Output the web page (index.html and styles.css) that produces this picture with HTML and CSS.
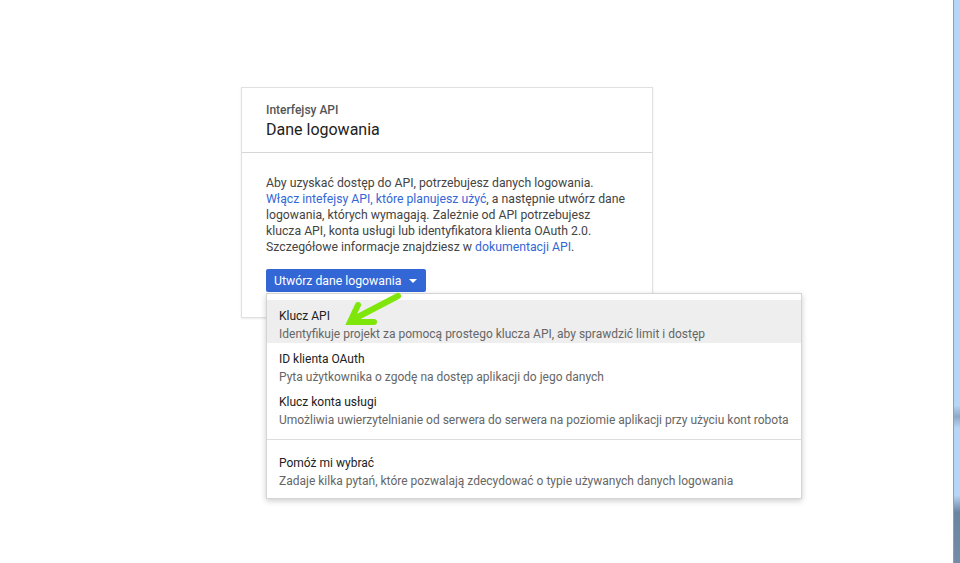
FILE: index.html
```html
<!doctype html>
<html lang="pl">
<head>
	<meta charset="utf-8" />
	<title>Dane logowania</title>
	<link rel="stylesheet" href="styles.css">
</head>
<body>

	<div class="window">
		<main class="page">

			<!-- BEGIN: Credentials card. -->
			<section class="card">
				<header class="card__header">
					<div class="card__kicker">Interfejsy API</div>
					<h1 class="card__title">Dane logowania</h1>
				</header>

				<div class="card__body">
					<p class="card__text">
						Aby uzyskać dostęp do API, potrzebujesz danych logowania.<br>
						<a href="#">Włącz intefejsy API, które planujesz użyć</a>, a następnie utwórz dane<br>
						logowania, których wymagają. Zależnie od API potrzebujesz<br>
						klucza API, konta usługi lub identyfikatora klienta OAuth 2.0.<br>
						Szczegółowe informacje znajdziesz w <a href="#">dokumentacji API</a>.
					</p>

					<div class="dropdown">
						<button class="button" type="button">
							Utwórz dane logowania
							<span class="button__caret"></span>
						</button>

						<ul class="menu">
							<li class="menu__item menu__item--active">
								<div class="menu__title">Klucz API</div>
								<div class="menu__desc">Identyfikuje projekt za pomocą prostego klucza API, aby sprawdzić limit i dostęp</div>
							</li>
							<li class="menu__item">
								<div class="menu__title">ID klienta OAuth</div>
								<div class="menu__desc">Pyta użytkownika o zgodę na dostęp aplikacji do jego danych</div>
							</li>
							<li class="menu__item">
								<div class="menu__title">Klucz konta usługi</div>
								<div class="menu__desc">Umożliwia uwierzytelnianie od serwera do serwera na poziomie aplikacji przy użyciu kont robota</div>
							</li>
							<li class="menu__divider"></li>
							<li class="menu__item">
								<div class="menu__title">Pomóż mi wybrać</div>
								<div class="menu__desc">Zadaje kilka pytań, które pozwalają zdecydować o typie używanych danych logowania</div>
							</li>
						</ul>

						<!-- Hand-drawn pointer on top of the screenshot. -->
						<svg class="pointer" width="70" height="40" viewBox="0 0 70 40">
							<path d="M54 5 L8 29" fill="none" stroke="#7ee60a" stroke-width="6" stroke-linecap="round" />
							<path d="M14 14 L6 31 L30 31" fill="none" stroke="#7ee60a" stroke-width="6" stroke-linecap="round" stroke-linejoin="miter" />
						</svg>
					</div>
				</div>
			</section>
			<!-- END: Credentials card. -->

		</main>
		<div class="scrollbar"></div>
	</div>

</body>
</html>
```

FILE: styles.css
```css
html {
	box-sizing: border-box ;
}

*, *:before, *:after {
	box-sizing: inherit ;
}

body {
	background-color: #ffffff ;
	color: #212121 ;
	font-family: Roboto, "Liberation Sans", sans-serif ;
	font-size: 13px ;
	margin: 0px 0px 0px 0px ;
}

.window {
	display: flex ;
	height: 563px ;
	overflow: hidden ;
}

.page {
	flex: 1 1 auto ;
	padding: 87px 0px 0px 241px ;
}

.scrollbar {
	background: linear-gradient( to bottom, #b7d5f4 0%, #b7d5f4 72%, #8fa8c4 74%, #b7d5f4 76%, #b7d5f4 88%, #6b84a0 91%, #748ca8 100% ) ;
	border-left: 1px solid #8d9db2 ;
	flex: 0 0 7px ;
}

/* BEGIN: Card. */
.card {
	background-color: #ffffff ;
	border: 1px solid #e0e0e0 ;
	box-shadow: 0px 1px 2px rgba( 0, 0, 0, 0.08 ) ;
	width: 412px ;
}

.card__header {
	border-bottom: 1px solid #d6d6d6 ;
	padding: 14px 24px 10px 24px ;
}

.card__kicker {
	color: #555555 ;
	font-size: 12px ;
	font-weight: 500 ;
	line-height: 16px ;
}

.card__title {
	font-size: 16px ;
	font-weight: 400 ;
	line-height: 24px ;
	margin: 0px 0px 0px 0px ;
}

.card__body {
	padding: 22px 24px 25px 24px ;
}

.card__text {
	color: #444444 ;
	font-size: 12.25px ;
	line-height: 16px ;
	margin: 0px 0px 14px 0px ;
	white-space: nowrap ;
}

.card__text a {
	color: #3367d6 ;
	text-decoration: none ;
}
/* END: Card. */

/* BEGIN: Dropdown. */
.dropdown {
	position: relative ;
}

.button {
	align-items: center ;
	background-color: #3367d6 ;
	border: 0px none ;
	border-radius: 2px ;
	color: #ffffff ;
	display: inline-flex ;
	font-family: inherit ;
	font-size: 12.25px ;
	gap: 8px ;
	height: 23px ;
	padding: 0px 9px 0px 8px ;
}

.button__caret {
	border-left: 4px solid transparent ;
	border-right: 4px solid transparent ;
	border-top: 4px solid #ffffff ;
	height: 0px ;
	width: 0px ;
}

.menu {
	background-color: #ffffff ;
	border: 1px solid #d4d4d4 ;
	box-shadow: 0px 2px 6px rgba( 0, 0, 0, 0.2 ) ;
	font-size: 12px ;
	left: 0px ;
	list-style: none ;
	margin: 0px 0px 0px 0px ;
	padding: 6px 0px 8px 0px ;
	position: absolute ;
	top: 24px ;
	width: 536px ;
	z-index: 2 ;
}

.menu__item {
	line-height: 17px ;
	padding: 8px 12px 0px 12px ;
}

.menu__item--active {
	background-color: #eeeeee ;
}

.menu__title {
	color: #212121 ;
}

.menu__desc {
	color: #666666 ;
	margin: 1px 0px 0px 0px ;
}

.menu__divider {
	border-top: 1px solid #dddddd ;
	margin: 10px 0px 7px 0px ;
}

.pointer {
	left: 78px ;
	position: absolute ;
	top: 22px ;
	z-index: 3 ;
}
/* END: Dropdown. */
```
